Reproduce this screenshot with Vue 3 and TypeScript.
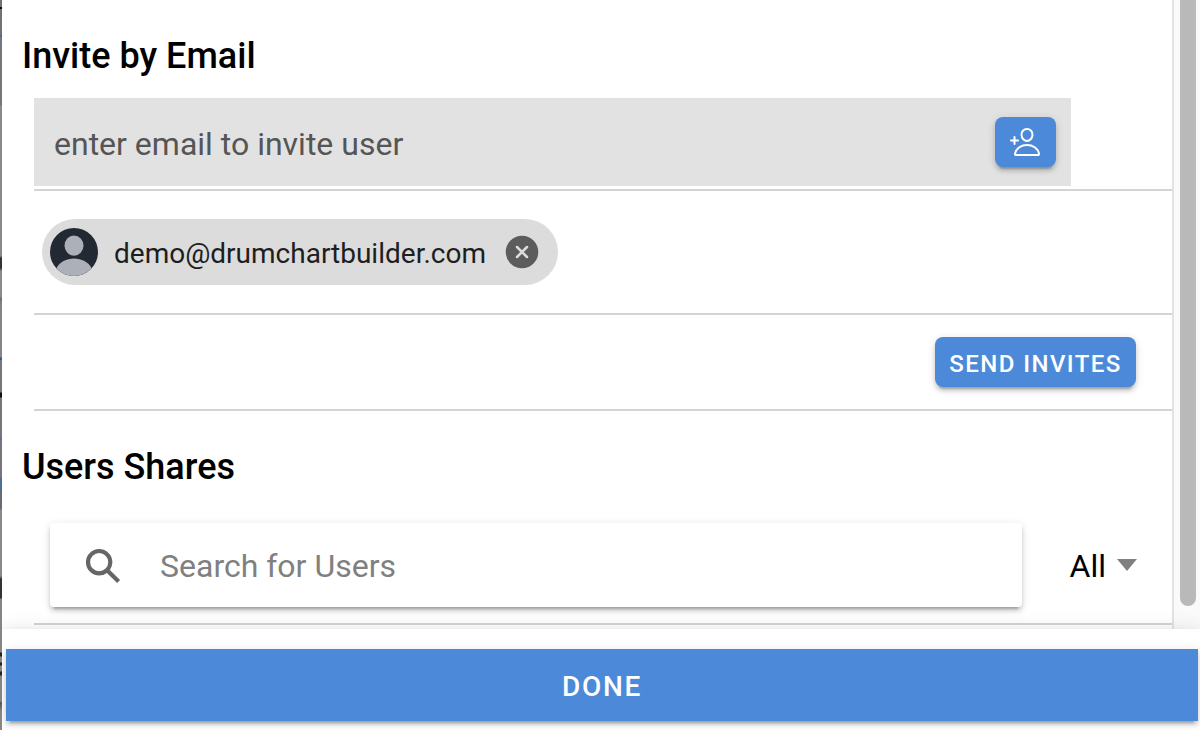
<script setup lang="ts">
import { ref } from 'vue'

const invites = ref<string[]>(['demo@drumchartbuilder.com'])
const email = ref('')
const query = ref('')

function addInvite(): void {
  const value = email.value.trim()
  if (value) invites.value.push(value)
  email.value = ''
}

function removeInvite(index: number): void {
  invites.value.splice(index, 1)
}
</script>

<template>
  <div class="screen">
    <div class="backdrop"></div>
    <div class="modal">
      <div class="body">
        <main class="content">
          <h2 class="title">Invite by Email</h2>
          <div class="row field-row">
            <div class="field">
              <input v-model="email" class="email" placeholder="enter email to invite user" />
              <button class="btn add" aria-label="Add" @click="addInvite">
                <svg width="32" height="32" viewBox="0 0 512 512" fill="none" stroke="#fff" stroke-width="32" stroke-linecap="round" stroke-linejoin="round">
                  <path d="M376 144c-3.92 52.87-44 96-88 96s-84.15-43.12-88-96c-4-55 35-96 88-96s92 42 88 96z" />
                  <path d="M288 304c-87 0-175.3 48-191.64 138.6-2 10.92 4.21 21.4 15.65 21.4H464c11.44 0 17.62-10.48 15.65-21.4C463.3 352 375 304 288 304z" />
                  <path d="M88 176v112M144 232H32" />
                </svg>
              </button>
            </div>
          </div>
          <div class="row chip-row">
            <div v-for="(invite, i) in invites" :key="invite" class="chip">
              <svg class="avatar" width="48" height="48" viewBox="0 0 48 48">
                <circle cx="24" cy="24" r="24" fill="#222933" />
                <ellipse cx="24" cy="17.6" rx="9.5" ry="10.2" fill="#abb0b9" />
                <path d="M6.4 40.3C9.5 34 16.5 30.5 24 30.5S38.5 34 41.6 40.3A24 24 0 0 1 6.4 40.3z" fill="#abb0b9" />
              </svg>
              <span class="chip-label">{{ invite }}</span>
              <svg class="remove" width="40" height="40" viewBox="0 0 512 512" @click="removeInvite(i)">
                <circle cx="256" cy="256" r="208" fill="#5c5c5c" />
                <path d="M192 192l128 128M320 192L192 320" stroke="#dcdcdc" stroke-width="32" stroke-linecap="round" />
              </svg>
            </div>
          </div>
          <div class="row send-row">
            <button class="btn send">SEND INVITES</button>
          </div>
          <h2 class="title shares">Users Shares</h2>
          <div class="row search-row">
            <label class="search">
              <svg class="glass" width="42" height="42" viewBox="0 0 512 512" fill="#666">
                <path d="M464 428L339.92 303.9a160.48 160.48 0 0030.72-94.58C370.64 120.37 298.27 48 209.32 48S48 120.37 48 209.32s72.37 161.32 161.32 161.32a160.48 160.48 0 0094.58-30.72L428 464zM209.32 319.69a110.38 110.38 0 11110.37-110.37 110.5 110.5 0 01-110.37 110.37z" />
              </svg>
              <input v-model="query" class="query" placeholder="Search for Users" />
            </label>
            <div class="filter">
              <span>All</span>
              <i class="caret"></i>
            </div>
          </div>
        </main>
        <div class="track"><div class="thumb"></div></div>
      </div>
      <footer class="footer">
        <button class="done">DONE</button>
      </footer>
    </div>
  </div>
</template>

<style>
body {
  margin: 0;
  overflow: hidden;
}
</style>

<style scoped>
* {
  box-sizing: border-box;
}

.screen {
  display: flex;
  width: 1200px;
  height: 730px;
  overflow: hidden;
  background: #fff;
  font-family: Roboto, "Liberation Sans", sans-serif;
  color: #000;
}

.backdrop {
  flex: none;
  width: 2px;
  background: linear-gradient(
    #737178 0 7px, #111 7px 9px, #737178 9px 35px, #3d6c9c 35px 37px, #77757c 37px 105px,
    #898989 106px 256px, #333 258px 268px, #8a8a8a 271px 297px, #707070 298px, #858585 305px 357px,
    #2e5e92 358px 360px, #77767d 360px 392px, #111 393px 397px, #77757c 398px 438px,
    #4a709a 439px, #77757c 440px 477px, #4a709a 478px 490px, #6c6a72 491px 509px, #898989 510px 576px,
    #333 579px 598px, #858585 599px 652px, #222 653px 656px, #858585 657px 662px,
    #222 663px 665px, #858585 666px 671px, #222 672px 675px, #858585 676px 701px,
    #555 703px, #858585 711px
  );
}

.modal {
  flex: 1;
  display: flex;
  flex-direction: column;
  min-width: 0;
}

.body {
  display: flex;
  height: 629px;
}

.content {
  flex: 1;
  min-width: 0;
}

.title {
  height: 98px;
  margin: 0;
  padding: 35px 0 0 20px;
  font-size: 36px;
  line-height: 42px;
  font-weight: 500;
}

.shares {
  height: 97px;
}

.row {
  display: flex;
  margin-left: 32px;
  border-bottom: 2px solid #d4d4d4;
}

.field-row {
  height: 93px;
}

.field {
  display: flex;
  align-items: flex-start;
  justify-content: space-between;
  width: 1037px;
  height: 88px;
  padding: 19px 15px 0 20px;
  background: #e2e2e2;
}

input {
  padding: 0;
  border: 0;
  outline: 0;
  background: transparent;
  font: 32px/54px Roboto, "Liberation Sans", sans-serif;
}

input::placeholder {
  opacity: 1;
}

.email {
  width: 800px;
  height: 54px;
}

.email::placeholder {
  color: #555;
}

.btn {
  padding: 0;
  border: 0;
  border-radius: 8px;
  background: #4c8ad9;
  color: #fff;
  box-shadow: 0 6px 2px -4px rgba(0, 0, 0, 0.2), 0 4px 4px rgba(0, 0, 0, 0.14), 0 2px 10px rgba(0, 0, 0, 0.12);
}

.add {
  display: flex;
  width: 61px;
  height: 50px;
  padding: 9px 0 0 14px;
}

.chip-row {
  height: 124px;
  padding: 28px 0 0 8px;
}

.chip {
  display: flex;
  align-items: center;
  width: 516px;
  height: 66px;
  padding: 0 16px 0 8px;
  border-radius: 33px;
  background: #dcdcdc;
}

.chip-label {
  margin-left: 16px;
  padding-top: 4px;
  color: #1e1e1e;
  font-size: 28px;
  line-height: 40px;
  white-space: nowrap;
}

.remove {
  margin-left: auto;
}

.send-row {
  height: 96px;
  padding: 22px 36px 0 0;
  justify-content: flex-end;
}

.send {
  width: 201px;
  height: 50px;
  padding-top: 4px;
  font: 500 24px/46px Roboto, "Liberation Sans", sans-serif;
  letter-spacing: 1.44px;
}

.search-row {
  height: 117px;
  padding: 15px 36px 0 16px;
  align-items: flex-start;
}

.search {
  display: flex;
  align-items: center;
  width: 972px;
  height: 84px;
  padding-left: 32px;
  border-radius: 4px;
  background: #fff;
  box-shadow: 0 6px 2px -4px rgba(0, 0, 0, 0.2), 0 4px 4px rgba(0, 0, 0, 0.14), 0 2px 10px rgba(0, 0, 0, 0.12);
}

.glass {
  margin-top: 2px;
}

.query {
  width: 800px;
  margin-left: 36px;
  padding-top: 2px;
}

.query::placeholder {
  color: #808080;
}

.filter {
  display: flex;
  align-items: center;
  height: 86px;
  margin: 0 -1px 0 auto;
  gap: 11px;
  font-size: 32px;
}

.caret {
  width: 20px;
  height: 12px;
  margin-top: -2px;
  background: #808080;
  clip-path: polygon(0 0, 100% 0, 50% 100%);
}

.track {
  width: 28px;
  padding-left: 6px;
  border-left: 2px solid #e3e3e3;
  background: #fafafa;
}

.thumb {
  width: 16px;
  height: 606px;
  border-radius: 0 0 8px 8px;
  background: #b9b9b9;
}

.footer {
  position: relative;
  height: 101px;
  padding: 20px 2px 0 4px;
  background: #fff;
  box-shadow: 0 4px 8px -2px rgba(0, 0, 0, 0.2), 0 8px 10px rgba(0, 0, 0, 0.14), 0 2px 20px rgba(0, 0, 0, 0.12);
  clip-path: inset(-40px 0 0 0);
}

.done {
  display: block;
  width: 1192px;
  height: 72px;
  padding: 3px 0 0;
  border: 0;
  background: #4c8ad9;
  color: #fff;
  font: 500 28px/68px Roboto, "Liberation Sans", sans-serif;
  letter-spacing: 1.68px;
  box-shadow: 0 6px 2px -4px rgba(0, 0, 0, 0.2), 0 4px 4px rgba(0, 0, 0, 0.14), 0 2px 10px rgba(0, 0, 0, 0.12);
}
</style>
